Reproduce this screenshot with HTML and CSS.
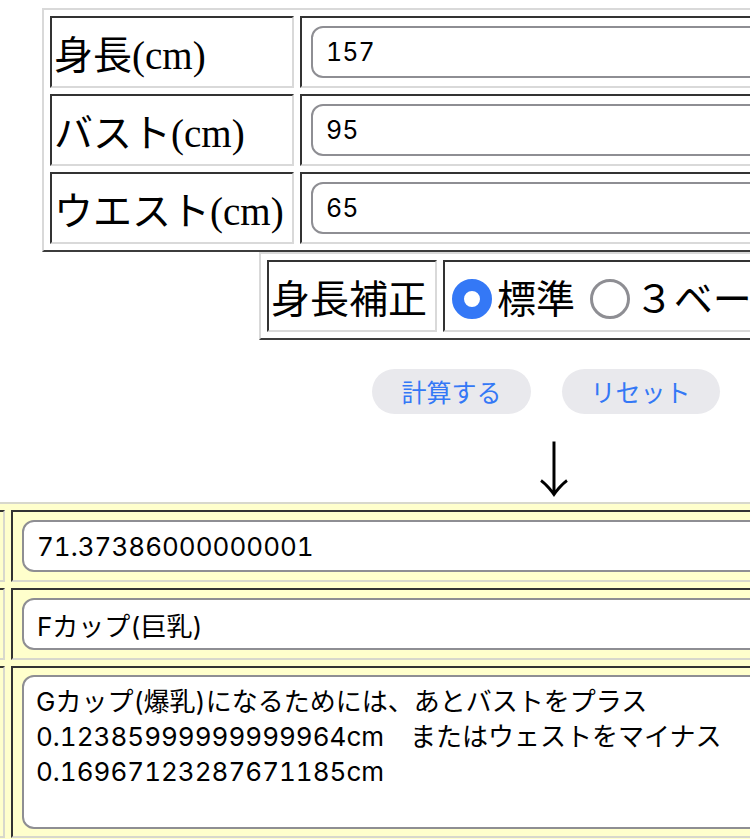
FILE: index.html
```html
<!DOCTYPE html>
<html lang="ja">
<head>
<meta charset="utf-8">
<title>カップ計算</title>
<link rel="stylesheet" href="styles.css">
</head>
<body>
<div class="page">
  <table class="grid form-table">
    <tr>
      <th class="label">身長(cm)</th>
      <td><input class="field" type="text" value="157"></td>
    </tr>
    <tr>
      <th class="label">バスト(cm)</th>
      <td><input class="field" type="text" value="95"></td>
    </tr>
    <tr>
      <th class="label">ウエスト(cm)</th>
      <td><input class="field" type="text" value="65"></td>
    </tr>
  </table>

  <table class="grid opt-table">
    <tr>
      <th class="label">身長補正</th>
      <td class="opts"><label class="opt"><input class="radio" type="radio" name="hosei" checked>標準</label> <label class="opt"><input class="radio" type="radio" name="hosei">３ベース</label></td>
    </tr>
  </table>

  <div class="buttons">
    <button class="btn" type="button">計算する</button>
    <button class="btn" type="button">リセット</button>
  </div>

  <div class="arrow">↓</div>

  <table class="grid result-table">
    <tr>
      <th class="label"></th>
      <td><input class="field result" type="text" value="71.37386000000001"></td>
    </tr>
    <tr>
      <th class="label"></th>
      <td><input class="field result" type="text" value="Fカップ(巨乳)"></td>
    </tr>
    <tr>
      <th class="label"></th>
      <td><textarea class="memo">Gカップ(爆乳)になるためには、あとバストをプラス
0.12385999999999964cm　またはウェストをマイナス
0.16967123287671185cm</textarea></td>
    </tr>
  </table>
</div>
</body>
</html>
```

FILE: styles.css
```css
html, body {
  margin: 0;
  padding: 0;
  width: 750px;
  height: 839px;
  overflow: hidden;
  background: #ffffff;
}

.page {
  width: 1092px;
  padding-top: 8px;
  display: flex;
  flex-direction: column;
  align-items: center;
  font-family: "Liberation Serif", "Noto Sans CJK JP", serif;
  font-size: 39px;
  color: #000000;
}

.grid {
  flex: none;
  box-sizing: border-box;
  table-layout: fixed;
  border-collapse: separate;
  border-spacing: 6px;
  border: 2px solid;
  border-color: #d9d9d9 #3c3c3c #3c3c3c #d9d9d9;
}

.grid th,
.grid td {
  border: 2px solid;
  border-color: #333333 #d9d9d9 #d9d9d9 #333333;
  padding: 2px;
  height: 64px;
  font-weight: normal;
  text-align: left;
  vertical-align: middle;
}

.grid th.label {
  white-space: nowrap;
  box-sizing: border-box;
}

.form-table { width: 1008px; }
.form-table th.label { width: 244px; }

.opt-table { width: 574px; }
.opt-table th.label { width: 170px; }

.result-table {
  width: 1294px;
  background: #ffffcc;
  border-color: #d8d8cc #3c3c3c #3c3c3c #d8d8cc;
}
.result-table th.label { width: 98px; }
.result-table th,
.result-table td {
  border-color: #333333 #d8d8cc #d8d8cc #333333;
}

.field {
  display: block;
  box-sizing: border-box;
  width: calc(100% - 14px);
  height: 52px;
  margin: 6px 7px;
  padding: 0 13px;
  border: 2px solid #8e8e93;
  border-radius: 12px;
  background: #ffffff;
  font-family: "Inter", "Noto Sans CJK JP", sans-serif;
  font-size: 25px;
  font-variant-numeric: tabular-nums;
  color: #000000;
  outline: none;
}

.field.result {
  font-size: 26px;
}

.memo {
  display: block;
  box-sizing: border-box;
  width: calc(100% - 14px);
  height: 154px;
  margin: 5px 7px;
  padding: 7px 12px;
  border: 2px solid #8e8e93;
  border-radius: 12px;
  background: #ffffff;
  font-family: "Inter", "Noto Sans CJK JP", sans-serif;
  font-size: 26px;
  font-variant-numeric: tabular-nums;
  line-height: 35px;
  color: #000000;
  resize: none;
  overflow: hidden;
  outline: none;
}

.opts {
  white-space: nowrap;
}

.opt {
  display: inline;
}

.radio {
  -webkit-appearance: none;
  appearance: none;
  box-sizing: border-box;
  width: 40px;
  height: 40px;
  margin: 0 5px 0 5px;
  border: 3px solid #8e8e93;
  border-radius: 50%;
  background: #ffffff;
  vertical-align: middle;
  position: relative;
  top: -5px;
}

.radio:checked {
  border: 12px solid #3478f6;
}

.buttons {
  display: flex;
  gap: 31px;
  margin-top: 29px;
}

.btn {
  height: 45px;
  padding: 0 29px;
  border: 0;
  border-radius: 23px;
  background: #e9e9ed;
  color: #3478f6;
  font-family: "Noto Sans CJK JP", sans-serif;
  font-size: 25px;
  line-height: 45px;
}

.arrow {
  box-sizing: border-box;
  height: 88px;
  padding: 15px 0 0 16px;
  line-height: 73px;
  font-family: "Noto Sans CJK JP", sans-serif;
  font-size: 60px;
  font-weight: 300;
  color: #000000;
}
```
